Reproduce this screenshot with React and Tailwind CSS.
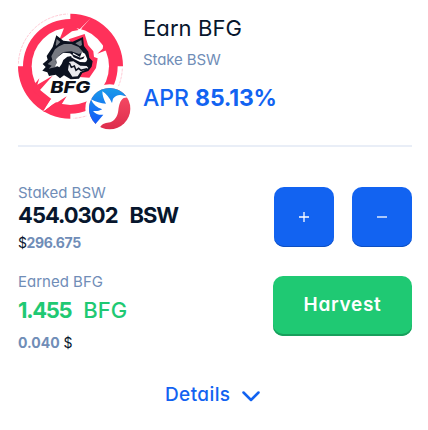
function PoolLogo() {
  return (
    <svg className="block shrink-0 w-[114px] h-[118px]" viewBox="24 15 342 354">
      {/* ring, its outer edge steps in on two of the quarters */}
      <path fill="#ff315a" d="M181 17 A157 157 0 0 1 339 175 L323 175 A142 142 0 0 1 181 317 L181 332 A157 157 0 0 1 24 175 L39 175 A142 142 0 0 1 181 33 Z" />
      <circle cx="181" cy="175" r="116" fill="#fff" />
      <g fill="none" stroke="#ff315a" strokeOpacity=".3" strokeWidth="2.5" strokeDasharray="9 3">
        <path d="M25 167 A156 156 0 0 1 173 18" />
        <path d="M337 182 A156 156 0 0 1 190 331" />
      </g>
      {/* lightning cuts */}
      <path fill="#fff" d="M243 29 L203 70 L190 69 L181 82 L206 80 L216 59 Z" />
      <path fill="#fff" d="M103 307 L125 271 L139 281 L148 277 L126 290 L101 310 Z" />
      <path fill="#fff" d="M98 312 L127 267 L139 279 Z" />
      {/* spikes that run inwards from the ring */}
      <path fill="#ff315a" d="M206 66 L186 70 L147 98 L163 58 L190 52 Z" />
      <path fill="#ff315a" d="M272 98 L280 111 L278 122 L262 137 L291 126 L300 118 Z" />
      <path fill="#ff315a" d="M76 226 L88 211 L82 230 L128 203 L90 246 L124 273 L108 284 L66 244 Z" />
      <path fill="#ff315a" d="M99 311 L170 265 L153 292 L170 300 L156 318 Z" />
      {/* wolf head */}
      <path fill="#ff315a" d="M176 94 L224 78 L234 111 L250 130 L252 147 L263 151 L258 180 L238 209 L207 207 L225 160 Z" />
      <path fill="#0c1220" d="M139 82 L160 98 L188 101 L219 87 L222 114 L235 131 L238 149 L248 160 L245 176 L235 189 L217 195 L207 212 L182 214 L162 202 L150 211 L137 200 L117 204 L112 193 L97 188 L107 177 L98 168 L113 155 L110 144 L128 117 Z" />
      <path fill="#777a82" d="M147 115 L162 108 L184 108 L206 117 L219 132 L207 138 L184 130 L160 132 L146 143 L137 160 L142 176 L116 182 L125 173 L113 168 L127 156 L124 145 L135 124 Z" />
      <path fill="#fff" d="M146 145 L160 134 L180 136 L190 143 L172 146 L160 156 L155 168 L148 178 L141 174 L135 176 L140 165 L138 154 Z" />
      <path fill="#777a82" d="M140 93 L151 102 L140 113 L137 112 Z M196 106 L214 96 L216 111 L210 115 Z" />
      <path fill="#fff" d="M190 135 L210 147 L216 132 L225 137 L232 154 L228 163 L210 162 L192 153 L183 147 Z" />
      <path fill="#0c1220" d="M184 137 L212 149 L224 145 L220 152 L209 155 L191 148 Z" />
      <path fill="#e9e9ed" d="M178 161 L190 160 L211 173 L230 174 L235 180 L224 186 L211 192 L203 205 L187 206 L174 186 Z" />
      <path fill="none" stroke="#0c1220" strokeWidth="4.5" d="M178 165 L184 178 L193 174 L198 187 L206 181 L213 187 L231 182" />
      <path fill="#0c1220" d="M225 162 L244 158 L243 172 L230 174 Z" />
      <text
        x="121"
        y="254"
        textLength="120"
        lengthAdjust="spacingAndGlyphs"
        className="font-['Inter'] font-extrabold italic"
        fontSize="47"
        fill="#0c0f19"
      >
        BFG
      </text>
      {/* hummingbird token */}
      <defs>
        <linearGradient id="sky" x1="0" y1="0" x2="0" y2="1">
          <stop offset="0" stopColor="#199be9" />
          <stop offset="1" stopColor="#1254fa" />
        </linearGradient>
        <linearGradient id="rose" x1="0" y1="0" x2="0" y2="1">
          <stop offset="0" stopColor="#fb5069" />
          <stop offset="1" stopColor="#dd2d4c" />
        </linearGradient>
      </defs>
      <circle cx="299" cy="302" r="73" fill="#fff" />
      <circle cx="299" cy="302" r="62" fill="url(#rose)" />
      <path fill="url(#sky)" d="M348 264 A62 62 0 1 0 267 355 L322 270 Z" />
      <path
        fill="#fff"
        d="M359 267 L341 263 C330 258 316 261 309 272 L306 285 C299 269 288 257 277 250 C277 261 281 275 288 287 C272 286 257 282 243 274 C249 289 260 299 277 304 C267 309 260 310 249 309 C257 319 270 322 280 320 L254 351 L268 361 C278 344 289 345 301 343 C315 338 323 325 325 307 C327 292 330 277 341 270 Z"
      />
    </svg>
  )
}

function SquareButton({ label, children }) {
  return (
    <button aria-label={label} className="flex items-center justify-center size-[60px] rounded-[10px] bg-[#1263f1] shadow-[inset_0_-1px_0_#0e4fc1]">
      <svg className="size-3" viewBox="0 0 12 12" stroke="#fff" strokeWidth="1.3">
        {children}
      </svg>
    </button>
  )
}

export default function App() {
  return (
    <div className="w-[428px] h-[430px] bg-white pl-[18px] pr-4 pt-[13px] font-['Inter',sans-serif] [font-feature-settings:'cv11'] text-[#07162d] whitespace-nowrap">
      <div className="flex h-[132px]">
        <PoolLogo />
        <div className="ml-[11px]">
          <h2 className="text-[22px] leading-[30px] tracking-[0.1px]">Earn BFG</h2>
          <p className="mt-[7px] text-[15px] leading-5 tracking-[-0.1px] text-[#708db7]">Stake BSW</p>
          <p className="mt-[13px] text-[23px] leading-[30px] font-medium text-[#1263f1]">
            APR <span className="font-bold tracking-[-0.2px]">85.13%</span>
          </p>
        </div>
      </div>
      <hr className="border-0 h-0.5 bg-[#e9eef7]" />

      <div className="flex justify-between mt-9">
        <div>
          <p className="text-[15px] leading-5 text-[#708db7]">Staked BSW</p>
          <p className="flex gap-3 -mt-px text-[22px] leading-[26px] font-bold">
            <span className="tracking-[-1px]">454.0302</span>
            <span className="tracking-[-1.1px]">BSW</span>
          </p>
          <p className="mt-[5px] text-sm leading-5 tracking-[-0.4px]">
            $<span className="font-bold text-[#708db7]">296.675</span>
          </p>
        </div>
        <div className="flex gap-[18px] mt-1">
          <SquareButton label="Stake more">
            <path d="M6 1v10M1 6h10" />
          </SquareButton>
          <SquareButton label="Unstake">
            <path d="M1 6h10" />
          </SquareButton>
        </div>
      </div>

      <div className="flex justify-between mt-[19px]">
        <div>
          <p className="text-[15px] leading-5 text-[#708db7]">Earned BFG</p>
          <p className="flex gap-3 mt-[5px] text-[22px] leading-[26px] font-medium text-[#1fc973]">
            <span className="font-bold tracking-[-1.3px]">1.455</span>
            <span>BFG</span>
          </p>
          <p className="mt-2.5 text-sm leading-5">
            <span className="font-bold text-[#708db7]">0.040</span> $
          </p>
        </div>
        <button className="mt-1 w-[139px] h-[60px] rounded-[10px] bg-[#1fc973] shadow-[inset_0_-2px_0_#199f5c] pb-0.5 text-[19px] tracking-[0.7px] font-semibold text-white">
          Harvest
        </button>
      </div>

      <button className="flex items-center gap-[11px] mt-[29px] ml-[147px] text-[19px] leading-[26px] tracking-[0.4px] font-medium text-[#1263f1]">
        Details
        <svg className="mt-[3px] w-[18px] h-[11px]" viewBox="0 0 18 11" fill="none" stroke="currentColor" strokeWidth="2.5" strokeLinecap="round" strokeLinejoin="round">
          <path d="M1.5 1.5 9 9l7.5-7.5" />
        </svg>
      </button>
    </div>
  )
}
